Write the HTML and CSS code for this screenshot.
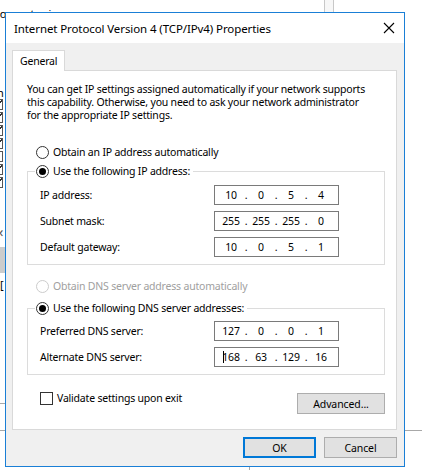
FILE: index.html
```html
<!DOCTYPE html>
<html>
<head>
<meta charset="utf-8">
<link rel="stylesheet" href="styles.css">
</head>
<body>
<div class="desk">
  <div class="bg-text">Connect using:</div>
  <div class="bg-col"></div>
  <div class="bg-h">h</div>
  <div class="bg-checks">
    <span class="bg-cb on"></span><span class="bg-cb on"></span><span class="bg-cb on"></span><span class="bg-cb on"></span><span class="bg-cb"></span><span class="bg-cb on"></span><span class="bg-cb on"></span>
  </div>
  <div class="bg-lt">&lsaquo;</div>
  <div class="bg-gray"></div>
  <div class="bg-br">[</div>
  <div class="bg-hl l1"></div>
  <div class="bg-hl l2"></div>
  <div class="bg-hl r1"></div>
  <div class="bg-vl"></div>

  <div class="dialog">
    <div class="titlebar">
      <span class="title">Internet Protocol Version 4 (TCP/IPv4) Properties</span>
      <svg class="close" width="12" height="12" viewBox="0 0 12 12"><path d="M1 1L11 11M11 1L1 11" stroke="#000" stroke-width="1.1" fill="none"/></svg>
    </div>
    <div class="content">
      <div class="tabs"><div class="tab">General</div></div>
      <div class="panel">
        <p class="intro">You can get IP settings assigned automatically if your network supports<br>this capability. Otherwise, you need to ask your network administrator<br>for the appropriate IP settings.</p>

        <div class="opt"><span class="radio"></span><span>Obtain an IP address automatically</span></div>

        <div class="group g1">
          <div class="legend"><span class="radio checked"></span><span>Use the following IP address:</span></div>
          <div class="row"><span class="lbl">IP address:</span><div class="ip"><span class="seg">10</span><span class="dot">.</span><span class="seg">0</span><span class="dot">.</span><span class="seg">5</span><span class="dot">.</span><span class="seg">4</span></div></div>
          <div class="row"><span class="lbl">Subnet mask:</span><div class="ip"><span class="seg">255</span><span class="dot">.</span><span class="seg">255</span><span class="dot">.</span><span class="seg">255</span><span class="dot">.</span><span class="seg">0</span></div></div>
          <div class="row"><span class="lbl">Default gateway:</span><div class="ip"><span class="seg">10</span><span class="dot">.</span><span class="seg">0</span><span class="dot">.</span><span class="seg">5</span><span class="dot">.</span><span class="seg">1</span></div></div>
        </div>

        <div class="opt disabled"><span class="radio"></span><span>Obtain DNS server address automatically</span></div>

        <div class="group g2">
          <div class="legend"><span class="radio checked"></span><span>Use the following DNS server addresses:</span></div>
          <div class="row first"><span class="lbl">Preferred DNS server:</span><div class="ip"><span class="seg">127</span><span class="dot">.</span><span class="seg">0</span><span class="dot">.</span><span class="seg">0</span><span class="dot">.</span><span class="seg">1</span></div></div>
          <div class="row"><span class="lbl">Alternate DNS server:</span><div class="ip"><span class="caret"></span><span class="seg">168</span><span class="dot">.</span><span class="seg">63</span><span class="dot">.</span><span class="seg">129</span><span class="dot">.</span><span class="seg">16</span></div></div>
        </div>

        <div class="bottom-row">
          <div class="check"><span class="cbox"></span><span>Validate settings upon exit</span></div>
          <button class="btn adv">Advanced...</button>
        </div>
      </div>
      <div class="actions">
        <button class="btn ok">OK</button>
        <button class="btn">Cancel</button>
      </div>
    </div>
  </div>
</div>
</body>
</html>
```
FILE: styles.css
```css
html, body {
  margin: 0;
  padding: 0;
  background: #fff;
}
body {
  width: 422px;
  height: 470px;
  overflow: hidden;
  font-family: "Noto Sans", "Open Sans", sans-serif;
  font-size: 10.5px;
  letter-spacing: -0.2px;
  color: #000;
}
.desk {
  position: relative;
  width: 422px;
  height: 470px;
  overflow: hidden;
}
.bg-text {
  position: absolute;
  left: -7px;
  top: 6px;
  font-size: 11px;
}
.bg-col {
  position: absolute;
  left: 324px;
  top: 0;
  width: 8px;
  height: 14px;
  border-left: 1px solid #c8c8c8;
  border-right: 1px solid #c8c8c8;
  background: #f7f7f7;
}
.bg-h {
  position: absolute;
  left: -3px;
  top: 85px;
  font-size: 11px;
}
.bg-checks {
  position: absolute;
  left: -8px;
  top: 99px;
  display: flex;
  flex-direction: column;
  gap: 2px;
}
.bg-cb {
  display: block;
  width: 9px;
  height: 9px;
  border: 1px solid #555;
  background: #fff;
}
.bg-cb.on {
  background: linear-gradient(135deg, #fff 45%, #333 46%, #333 60%, #fff 61%);
}
.bg-lt {
  position: absolute;
  left: -1px;
  top: 222px;
  font-size: 14px;
  color: #555;
}
.bg-gray {
  position: absolute;
  left: 0;
  top: 247px;
  width: 6px;
  height: 26px;
  background: #cccccc;
}
.bg-br {
  position: absolute;
  left: 0;
  top: 277px;
  font-size: 11px;
}
.bg-hl {
  position: absolute;
  height: 1px;
  background: #a8a8a8;
}
.bg-hl.l1 { left: 0; top: 403px; width: 6px; }
.bg-hl.l2 { left: 0; top: 430px; width: 6px; }
.bg-hl.r1 { left: 405px; top: 430px; width: 17px; }
.bg-vl {
  position: absolute;
  left: 249px;
  top: 466px;
  width: 1px;
  height: 4px;
  background: #a8a8a8;
}

.dialog {
  position: absolute;
  left: 5px;
  top: 12px;
  width: 400px;
  height: 455px;
  box-sizing: border-box;
  border: 1px solid #1a7fd6;
  background: #f0f0f0;
  display: flex;
  flex-direction: column;
}
.titlebar {
  height: 30px;
  background: #fff;
  display: flex;
  align-items: center;
  justify-content: space-between;
  padding: 0 9px 0 8px;
}
.title {
  font-size: 11.5px;
  letter-spacing: -0.1px;
}
.content {
  padding: 7px 7px 0 6px;
}
.tabs {
  display: flex;
  height: 20px;
}
.tab {
  width: 53px;
  height: 21px;
  box-sizing: border-box;
  border: 1px solid #d9d9d9;
  border-bottom: none;
  background: #fff;
  padding: 3px 0 0 7px;
  position: relative;
  z-index: 1;
}
.panel {
  width: 385px;
  height: 360px;
  box-sizing: border-box;
  border: 1px solid #d9d9d9;
  background: #fff;
  padding: 0 11px 0 14px;
}
.intro {
  margin: 12px 0 0 0;
  line-height: 13px;
  white-space: nowrap;
}
.opt, .legend, .check {
  display: flex;
  align-items: center;
  height: 16px;
  gap: 4px;
}
.opt {
  margin: 22px 0 0 9px;
}
.opt.disabled {
  color: #a0a0a0;
  margin-top: 13px;
}
.radio {
  width: 13px;
  height: 13px;
  box-sizing: border-box;
  border: 1px solid #333;
  border-radius: 50%;
  background: #fff;
  display: flex;
  align-items: center;
  justify-content: center;
}
.radio.checked::after {
  content: "";
  width: 7px;
  height: 7px;
  border-radius: 50%;
  background: #000;
}
.opt.disabled .radio {
  border-color: #cccccc;
}
.group {
  width: 358px;
  box-sizing: border-box;
  border: 1px solid #dcdcdc;
  padding: 0 0 7px 12px;
}
.g1 { margin-top: 11px; }
.g2 { margin-top: 14px; }
.legend {
  width: fit-content;
  margin: -9px 0 0 -5px;
  background: #fff;
  padding: 0 3px 0 1px;
}
.row {
  display: flex;
  align-items: center;
  height: 20px;
  margin-top: 6px;
}
.row.first {
  margin-top: 5px;
}
.lbl {
  width: 174px;
}
.ip {
  position: relative;
  display: flex;
  align-items: center;
  width: 125px;
  height: 20px;
  box-sizing: border-box;
  border: 1px solid #7a7a7a;
  background: #fff;
  padding-left: 3px;
}
.seg {
  width: 26px;
  text-align: center;
}
.dot {
  width: 4px;
  text-align: center;
}
.caret {
  position: absolute;
  left: 8px;
  top: 3px;
  width: 1px;
  height: 12px;
  background: #000;
}
.bottom-row {
  display: flex;
  justify-content: space-between;
  align-items: flex-start;
  margin-top: 16px;
  padding-left: 13px;
  width: 345px;
}
.check {
  height: 14px;
}
.cbox {
  width: 13px;
  height: 13px;
  box-sizing: border-box;
  border: 1px solid #333;
  background: #fff;
}
.btn {
  font-family: inherit;
  font-size: 10.5px;
  letter-spacing: -0.1px;
  color: #000;
  background: #e1e1e1;
  border: 1px solid #adadad;
  height: 21px;
  padding: 0;
  margin: 0;
}
.adv {
  width: 88px;
  margin-top: 2px;
}
.actions {
  display: flex;
  justify-content: flex-end;
  gap: 8px;
  margin-top: 7px;
}
.actions .btn {
  width: 73px;
}
.btn.ok {
  border: 2px solid #0078d7;
}
```
